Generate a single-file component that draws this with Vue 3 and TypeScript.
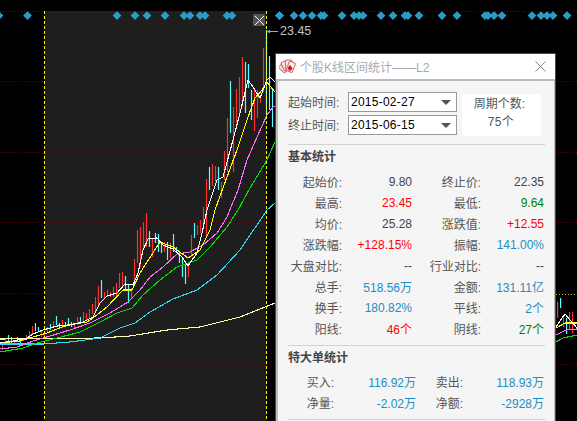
<script setup lang="ts">
type Tone = 'plain' | 'up' | 'down' | 'blue'
interface Cell { label: string; value: string; tone: Tone }

const gridYs = [11, 81, 152, 222, 364]
const diamondXs = [-1, 27.5, 117, 135, 147, 165, 184, 190, 200, 205, 227, 232, 279.5, 279.5, 294, 303, 312, 321, 324, 342, 354, 359, 363, 381, 393, 405, 408, 419, 442, 457, 485, 488, 494, 502, 532, 541, 547, 553, 567]

const diamonds = diamondXs.map(x => `${x},11.2 ${x + 4.4},15.6 ${x},20 ${x - 4.4},15.6`.trim())

// [top, bottom, colour] — r = rising, c = falling; one every 3px from x = 2.5
const raw: [number, number, 'r' | 'c'][] = [
  [345, 350, 'r'], [339, 345, 'r'], [335, 343, 'c'], [337, 344, 'c'], [340, 343, 'r'], [337, 342, 'c'],
  [338, 343, 'c'], [338, 341, 'r'], [335, 340, 'r'], [331, 338, 'r'], [326, 335, 'r'], [323, 331, 'c'],
  [327, 332, 'c'], [331, 337, 'r'], [332, 338, 'r'], [327, 333, 'r'], [324, 330, 'c'], [321, 327, 'r'],
  [316, 325, 'c'], [323, 328, 'c'], [320, 328, 'r'], [322, 327, 'c'], [318, 325, 'c'], [322, 327, 'c'],
  [323, 328, 'r'], [317, 325, 'r'], [317, 323, 'c'], [312, 322, 'r'], [313, 320, 'r'], [309, 318, 'r'],
  [304, 314, 'r'], [297, 312, 'r'], [286, 307, 'r'], [280, 298, 'c'], [292, 299, 'r'], [290, 297, 'r'],
  [292, 297, 'r'], [287, 297, 'r'], [283, 296, 'r'], [273, 288, 'r'], [272, 288, 'r'], [276, 290, 'c'],
  [285, 303, 'c'], [288, 299, 'r'], [259, 282, 'r'], [230, 263, 'r'], [227, 267, 'r'], [222, 250, 'r'],
  [213, 247, 'r'], [231, 247, 'c'], [238, 257, 'r'], [233, 243, 'c'], [234, 252, 'c'], [242, 253, 'c'],
  [242, 252, 'r'], [242, 260, 'c'], [243, 258, 'r'], [234, 252, 'c'], [247, 253, 'c'], [252, 263, 'c'],
  [257, 277, 'c'], [265, 284, 'c'], [265, 277, 'r'], [235, 257, 'r'], [223, 238, 'c'], [225, 235, 'r'],
  [220, 233, 'r'], [207, 223, 'r'], [179, 236, 'r'], [167, 190, 'c'], [164, 186, 'r'], [166, 182, 'r'],
  [167, 190, 'c'], [182, 198, 'r'], [151, 180, 'r'], [118, 172, 'r'], [81, 133, 'c'], [107, 172, 'r'],
  [89, 123, 'r'], [77, 113, 'r'], [57, 107, 'r'], [62, 113, 'c'], [64, 88, 'c'], [90, 120, 'c'],
  [88, 131, 'r'], [90, 118, 'r'], [95, 103, 'r'], [48, 92, 'r'], [30, 115, 'c'], [56, 110, 'c'], [88, 127, 'c'],
]
const candles = raw.map(([y1, y2, c], i) => ({ x: 1.9 + 3 * i, y: y1, h: y2 - y1, c: c as string }))
const tailCandles = [
  { x: 557, y: 302, h: 16, c: 'r' }, { x: 560, y: 298, h: 10, c: 'c' }, { x: 563, y: 315, h: 12, c: 'r' },
  { x: 566, y: 318, h: 16, c: 'c' }, { x: 569, y: 312, h: 18, c: 'r' }, { x: 572, y: 312, h: 21, c: 'r' },
]
const allCandles = [...candles, ...tailCandles]

const lines = [
  { color: '#fffdb0', pts: '0,339 100,338 130,336 167,330 200,327 240,317 275,303' },
  { color: '#2fd8f0', pts: '0,344 43,344 70,342 100,338 120,328 135,323 150,312 173,299 197,290 217,275 240,250 267,210 275,203' },
  { color: '#00e000', pts: '0,352 23,348 37,343 57,338 80,332 100,322 117,313 132,308 143,295 160,280 177,267 197,260 210,247 227,227 238,210 250,188 267,160 275,142' },
  { color: '#ff70ff', pts: '0,349 17,347 33,341 50,336 70,330 90,323 110,313 128,302 140,290 150,277 163,267 177,254 190,252 203,245 217,233 227,217 238,190 247,160 257,137 267,115 273,107 276,106' },
  { color: '#ffff00', pts: '0,343 20,341 33,337 47,333 67,325 87,322 97,315 107,307 123,290 132,290 140,273 147,262 160,242 173,247 188,258 200,250 210,230 215,210 227,177 237,150 247,120 255,98 262,90 267,82 275,92' },
  { color: '#ffffff', pts: '0,343 13,341 27,338 33,334 43,330 57,326 70,325 83,322 93,317 100,303 107,296 117,293 125,284 133,285 138,273 143,250 148,239 157,238 163,245 173,249 182,257 188,266 197,253 202,233 207,210 217,180 223,177 233,140 240,113 248,80 253,87 260,98 267,80 270,77 275,82' },
]
const tailLines = [
  { color: '#00e000', pts: '556,342 563,338 577,335' },
  { color: '#ff70ff', pts: '556,335 566,330 577,329' },
  { color: '#ffff00', pts: '556,328 565,323 577,323' },
  { color: '#ffffff', pts: '556,327 562,318 565,314 570,320 577,328' },
]
const allLines = [...lines, ...tailLines]

const basic: Cell[][] = [
  [{ label: '起始价:', value: '9.80', tone: 'plain' }, { label: '终止价:', value: '22.35', tone: 'plain' }],
  [{ label: '最高:', value: '23.45', tone: 'up' }, { label: '最低:', value: '9.64', tone: 'down' }],
  [{ label: '均价:', value: '25.28', tone: 'plain' }, { label: '涨跌值:', value: '+12.55', tone: 'up' }],
  [{ label: '涨跌幅:', value: '+128.15%', tone: 'up' }, { label: '振幅:', value: '141.00%', tone: 'blue' }],
  [{ label: '大盘对比:', value: '--', tone: 'plain' }, { label: '行业对比:', value: '--', tone: 'plain' }],
  [{ label: '总手:', value: '518.56万', tone: 'blue' }, { label: '金额:', value: '131.11亿', tone: 'blue' }],
  [{ label: '换手:', value: '180.82%', tone: 'blue' }, { label: '平线:', value: '2个', tone: 'blue' }],
  [{ label: '阳线:', value: '46个', tone: 'up' }, { label: '阴线:', value: '27个', tone: 'down' }],
]
const big: Cell[][] = [
  [{ label: '买入:', value: '116.92万', tone: 'blue' }, { label: '卖出:', value: '118.93万', tone: 'blue' }],
  [{ label: '净量:', value: '-2.02万', tone: 'blue' }, { label: '净额:', value: '-2928万', tone: 'blue' }],
]
</script>

<template>
  <div class="screen">
    <svg class="chart" width="577" height="421" viewBox="0 0 577 421">
      <rect x="45" y="11" width="221" height="410" fill="#1e1e1e" />
      <line v-for="y in gridYs" :key="y" x1="0" x2="577" :y1="y + 0.5" :y2="y + 0.5" class="grid" />
      <line x1="0" x2="577" y1="293.5" y2="293.5" class="grid" />
      <line x1="556" x2="577" y1="294.5" y2="294.5" class="grid-bright" />
      <polygon v-for="(p, i) in diamonds" :key="i" :points="p" fill="#2b9cc8" />
      <rect
        v-for="(c, i) in allCandles"
        :key="'c' + i"
        :x="c.x"
        :y="c.y"
        width="1.2"
        :height="c.h"
        :fill="c.c === 'r' ? '#ff3030' : '#55ffff'"
      />
      <polyline
        v-for="l in allLines"
        :key="l.pts"
        :points="l.pts"
        fill="none"
        :stroke="l.color"
        stroke-width="1.1"
        shape-rendering="crispEdges"
      />
      <line x1="44.5" x2="44.5" y1="11" y2="421" class="cursor" />
      <line x1="266.5" x2="266.5" y1="11" y2="421" class="cursor" />
      <polyline points="278,31.5 269,31.5" stroke="#aaa" fill="none" />
      <polygon points="267,31.5 270,29.5 270,33.5" fill="#aaa" />
    </svg>

    <div class="clear-btn">
      <svg width="11" height="11" viewBox="0 0 11 11"><path d="M1 1 10 10M10 1 1 10" stroke="#fff" stroke-width="1" fill="none" /></svg>
    </div>
    <div class="price">23.45</div>

    <section class="dialog">
      <header class="title-bar">
        <svg class="logo" width="17" height="15" viewBox="0 0 17 15">
          <g stroke="#d65050" stroke-width="0.9">
            <rect x="1.500" y="4.500" width="6.500" height="8.500" rx="1" transform="rotate(-48 5 9)" fill="#f8d8d8" />
            <rect x="3.500" y="2" width="6.500" height="9" rx="1" transform="rotate(-24 7 7)" fill="#fbe2e2" />
            <rect x="6.500" y="1" width="6.500" height="9.500" rx="1" transform="rotate(2 10 6)" fill="#fbeaea" />
            <rect x="8.500" y="3" width="6.500" height="10" rx="1" transform="rotate(22 12 8)" fill="#fdf4f4" />
          </g>
          <path d="M11 6c1.300 1.600 2.400 2.500 2.400 3.800 0 1.100-1.400 1.500-2 .7l.5 1.700h-1.800l.5-1.700c-.6.8-2 .4-2-.7 0-1.300 1.100-2.200 2.400-3.800z" fill="#c81e1e" />
        </svg>
        <span class="title">个股K线区间统计——L2</span>
        <svg class="close" width="11" height="11" viewBox="0 0 11 11"><path d="M.5.5 10.500 10.500M10.500.5.500 10.500" stroke="#8a8a8a" fill="none" /></svg>
      </header>

      <div class="body">
        <div class="range">
          <div class="range-fields">
            <div class="range-row">
              <span class="range-label">起始时间:</span>
              <div class="date"><span>2015-02-27</span><i class="caret"></i></div>
            </div>
            <div class="range-row">
              <span class="range-label">终止时间:</span>
              <div class="date"><span>2015-06-15</span><i class="caret"></i></div>
            </div>
          </div>
          <div class="period">
            <span>周期个数:</span>
            <span class="period-count">75个</span>
          </div>
        </div>

        <h3 class="heading">基本统计</h3>
        <div class="stats basic">
          <template v-for="(row, r) in basic" :key="r">
            <template v-for="cell in row" :key="cell.label">
              <span class="k">{{ cell.label }}</span>
              <span class="v" :class="cell.tone">{{ cell.value }}</span>
            </template>
          </template>
        </div>

        <h3 class="heading second">特大单统计</h3>
        <div class="stats big">
          <template v-for="(row, r) in big" :key="r">
            <template v-for="cell in row" :key="cell.label">
              <span class="k">{{ cell.label }}</span>
              <span class="v" :class="cell.tone">{{ cell.value }}</span>
            </template>
          </template>
        </div>
        <div class="end-rule"></div>
      </div>
    </section>
  </div>
</template>

<style>
html, body { overflow: hidden; background: #000; }
</style>

<style scoped>
.screen {
  position: relative;
  width: 577px;
  height: 421px;
  overflow: hidden;
  background: #000;
  font-family: "Liberation Sans", "Noto Sans CJK SC", sans-serif;
  font-size: 12px;
}
.chart { display: block; }
.grid { stroke: #7a0000; stroke-dasharray: 1 2; }
.grid-bright { stroke: #c8b000; stroke-dasharray: 1 2; }
.cursor { stroke: #ffff00; stroke-dasharray: 3 2; }
.clear-btn {
  position: absolute;
  left: 253px;
  top: 14px;
  width: 12px;
  height: 12px;
  background: #555;
  border-radius: 1px;
  display: flex;
  align-items: center;
  justify-content: center;
}
.price {
  position: absolute;
  left: 280px;
  top: 24px;
  line-height: 14px;
  font-size: 12.5px;
  color: #c4c4c4;
}
.dialog {
  position: absolute;
  left: 275px;
  top: 53px;
  width: 281px;
  border: 1px solid #4a4a4a;
  border-bottom: 0;
  box-sizing: border-box;
}
.title-bar {
  height: 25px;
  background: #fff;
  display: flex;
  align-items: center;
  padding: 0 9px 0 3px;
}
.logo { flex: none; }
.title {
  margin-left: 4px;
  color: #a9a9a9;
  flex: 1;
}
.close { flex: none; }
.body {
  border: 2px solid #bbb;
  border-right-width: 1px;
  border-bottom: 0;
  background: #f5f5f5;
  padding: 0 9px 0 10px;
  color: #555;
  height: 340px;
}
.range {
  display: flex;
  padding: 11px 0 8px;
  border-bottom: 1px solid #d2d2d2;
}
.range-fields {
  display: flex;
  flex-direction: column;
  gap: 3px;
}
.range-row {
  display: flex;
  align-items: center;
  height: 20px;
}
.range-label { width: 60px; padding-bottom: 2px; }
.date {
  width: 109px;
  height: 20px;
  box-sizing: border-box;
  border: 1px solid #999;
  background: #fff;
  color: #000;
  display: flex;
  align-items: center;
  justify-content: space-between;
  padding: 0 5px 0 2px;
  letter-spacing: 0.25px;
}
.caret {
  width: 0;
  height: 0;
  border-left: 5px solid transparent;
  border-right: 5px solid transparent;
  border-top: 5px solid #555;
}
.period {
  width: 79px;
  height: 42px;
  box-sizing: border-box;
  margin: 2px 0 0 5px;
  padding-right: 4px;
  background: #fff;
  border-radius: 2px;
  display: flex;
  flex-direction: column;
  align-items: center;
  line-height: 18px;
  padding-top: 1px;
}
.period-count { letter-spacing: 0.4px; margin-left: 3px; }
.heading {
  margin: 0;
  height: 20px;
  line-height: 20px;
  margin-top: 2px;
  font-size: 12px;
  font-weight: 700;
  color: #444;
}
.heading.second {
  margin-top: 0;
  padding-top: 2px;
  border-top: 1px solid #d2d2d2;
}
.stats {
  display: grid;
  grid-auto-rows: 21px;
  align-items: center;
  margin-top: 4px;
  margin-bottom: 6px;
}
.basic { grid-template-columns: 54px 70px 69px 63px; }
.big { grid-template-columns: 46px 82px 47px 81px; margin-top: 3px; margin-bottom: 6px; }
.k { text-align: right; white-space: nowrap; }
.v { text-align: right; white-space: nowrap; }
.plain { color: #444; }
.up { color: #ff0000; }
.down { color: #008000; }
.blue { color: #1f8dbf; }
.end-rule { border-top: 1px solid #d2d2d2; }
</style>
